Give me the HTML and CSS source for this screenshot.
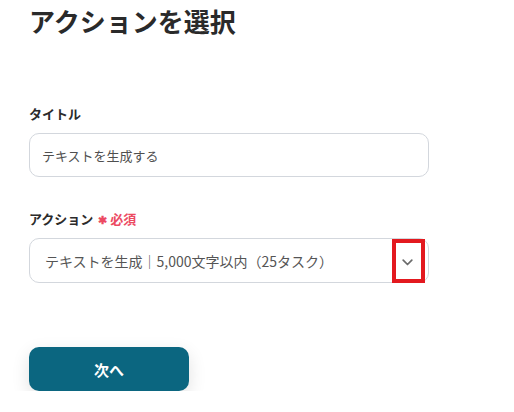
FILE: index.html
```html
<!DOCTYPE html>
<html lang="ja">
<head>
<meta charset="utf-8">
<link rel="stylesheet" href="styles.css">
</head>
<body>
<main class="page">
  <h1 class="title">アクションを選択</h1>
  <section class="field field-title">
    <label class="label">タイトル</label>
    <div class="input">テキストを生成する</div>
  </section>
  <section class="field field-action">
    <label class="label">アクション<span class="req"><span class="star">✱</span>必須</span></label>
    <div class="select">
      <span class="select-text">テキストを生成｜5,000文字以内（25タスク）</span>
      <span class="chev">
        <svg width="11" height="7" viewBox="0 0 11 7"><path d="M1.2 1.2 L5.5 5.5 L9.8 1.2" fill="none" stroke="#6b6b6b" stroke-width="1.7" stroke-linecap="round" stroke-linejoin="round"/></svg>
      </span>
      <span class="highlight"></span>
    </div>
  </section>
  <button class="next">次へ</button>
</main>
</body>
</html>
```
FILE: styles.css
```css
html, body {
  margin: 0;
  padding: 0;
  background: #fff;
}
body {
  font-family: "Noto Sans CJK JP", "Noto Sans", sans-serif;
  color: #333;
}
.page {
  padding: 0 0 0 29px;
  width: 400px;
}
.title {
  margin: 0;
  padding-top: 3px;
  font-size: 26px;
  line-height: 36px;
  font-weight: 700;
  color: #2a2a2a;
}
.field-title {
  margin-top: 66px;
}
.field-action {
  margin-top: 33px;
}
.label {
  display: flex;
  align-items: center;
  font-size: 13px;
  line-height: 18px;
  font-weight: 700;
  color: #2b2b2b;
}
.req {
  display: inline-flex;
  align-items: center;
  color: #ec4a62;
  margin-left: 5px;
}
.star {
  font-size: 11px;
  margin-right: 3px;
}
.input, .select {
  margin-top: 10px;
  box-sizing: border-box;
  border: 1px solid #d3d7dd;
  border-radius: 10px;
  display: flex;
  align-items: center;
  font-size: 13px;
  color: #4f4f4f;
}
.input {
  height: 44px;
  padding-left: 12px;
}
.select {
  position: relative;
  height: 45px;
  padding-left: 15px;
}
.select-text {
  flex: 1;
  font-size: 14px;
  color: #555;
}
.chev {
  width: 36px;
  display: flex;
  justify-content: center;
  margin-right: 3px;
  padding-top: 3px;
}
.highlight {
  position: absolute;
  left: 362px;
  top: 0;
  width: 33px;
  height: 44px;
  box-sizing: border-box;
  border: 4px solid #e3191f;
}
.next {
  display: block;
  margin-top: 64px;
  width: 160px;
  height: 44px;
  border: none;
  border-radius: 10px;
  background: #0b6680;
  color: #fff;
  font-family: inherit;
  font-size: 15px;
  font-weight: 700;
  box-shadow: 0 6px 18px rgba(0, 0, 0, 0.12);
}
```
